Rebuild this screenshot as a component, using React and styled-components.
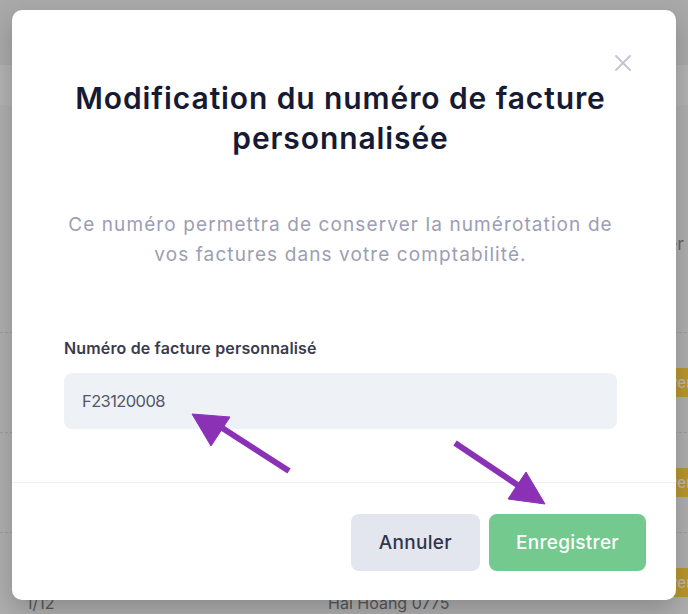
import React from "react";
import styled, { createGlobalStyle } from "styled-components";

const GlobalStyle = createGlobalStyle`
  html, body {
    margin: 0;
    padding: 0;
    overflow: hidden;
  }
  body {
    font-family: Inter, "Noto Sans", sans-serif;
  }
  * {
    box-sizing: border-box;
  }
`;

const rows = [
  { id: 1, ref: "F2312001", client: "Société Martin", badge: "À envoyer" },
  { id: 2, ref: "F2312002", client: "Dupont & Fils", badge: "À envoyer" },
  { id: 3, ref: "1/12", client: "Hai Hoang 0775", badge: "À envoyer" },
];

class App extends React.Component {
  render() {
    return (
      <>
        <GlobalStyle />
        <Page>
          <TopBar />
          <SubBar />
          <TableHead>
            <HeadLabel>Statut à envoyer</HeadLabel>
          </TableHead>
          {rows.map((r) => (
            <Row key={r.id}>
              <Cell>{r.ref}</Cell>
              <Cell>{r.client}</Cell>
              <Badge>{r.badge}</Badge>
            </Row>
          ))}

          <Overlay>
            <Modal>
              <CloseButton aria-label="Fermer">
                <svg width="16" height="16" viewBox="0 0 16 16">
                  <path
                    d="M1 1 L15 15 M15 1 L1 15"
                    stroke="#c3c4d3"
                    strokeWidth="1.8"
                    strokeLinecap="round"
                  />
                </svg>
              </CloseButton>
              <Body>
                <Title>
                  Modification du numéro de facture
                  <br />
                  personnalisée
                </Title>
                <Description>
                  Ce numéro permettra de conserver la numérotation de
                  <br />
                  vos factures dans votre comptabilité.
                </Description>
                <Label htmlFor="num">Numéro de facture personnalisé</Label>
                <Input id="num" defaultValue="F23120008" />
              </Body>
              <Footer>
                <Button>Annuler</Button>
                <Button primary>Enregistrer</Button>
              </Footer>
            </Modal>
          </Overlay>

          <Arrows viewBox="0 0 688 614">
            <g fill="#8b31b6" stroke="#8b31b6">
              <line x1="289" y1="471" x2="216" y2="424" strokeWidth="6" />
              <polygon points="192,414 230,417 211,446" strokeWidth="1" />
              <line x1="455" y1="443" x2="522" y2="488" strokeWidth="6" />
              <polygon points="526,472 508,499 545,504" strokeWidth="1" />
            </g>
          </Arrows>
        </Page>
      </>
    );
  }
}

export default App;

const Page = styled.div`
  position: relative;
  width: 688px;
  height: 614px;
  overflow: hidden;
  background: #f1f1f2;
`;
const TopBar = styled.div`
  height: 65px;
  background: #eaeaea;
`;
const SubBar = styled.div`
  height: 40px;
  background: #f7f7f7;
`;
const TableHead = styled.div`
  height: 227px;
  display: flex;
  align-items: center;
  justify-content: flex-end;
  padding: 50px 4px 0 0;
  color: #8d8d8d;
  font-size: 18px;
`;
const HeadLabel = styled.span``;
const Row = styled.div`
  height: 100px;
  display: grid;
  grid-template-columns: 200px 1fr auto;
  align-items: start;
  border-top: 1px dashed #d6d6d6;
  padding-top: 60px;
  margin-right: -14px;
  color: #7a7a7a;
  font-size: 16px;
`;
const Cell = styled.div`
  padding-left: 26px;
  &:nth-child(2) {
    padding-left: 128px;
  }
`;
const Badge = styled.div`
  align-self: center;
  margin-top: -60px;
  height: 29px;
  display: flex;
  align-items: center;
  padding: 0 10px;
  background: #ffcf40;
  color: #fff;
  font-size: 15px;
  font-weight: 500;
`;

const Overlay = styled.div`
  position: absolute;
  inset: 0;
  background: rgba(0, 0, 0, 0.28);
  display: flex;
  justify-content: center;
  align-items: flex-start;
  padding-top: 10px;
`;
const Modal = styled.div`
  position: relative;
  width: 664px;
  height: 590px;
  background: #fff;
  border-radius: 10px;
  box-shadow: 0 10px 25px rgba(0, 0, 0, 0.2);
  display: flex;
  flex-direction: column;
`;
const CloseButton = styled.button`
  position: absolute;
  top: 45px;
  right: 45px;
  width: 16px;
  height: 16px;
  padding: 0;
  border: none;
  background: none;
  display: flex;
  cursor: pointer;
`;
const Body = styled.div`
  flex: 1;
  padding: 68px 59px 0 52px;
  display: flex;
  flex-direction: column;
`;
const Title = styled.h2`
  margin: 0;
  text-align: center;
  font-size: 30px;
  line-height: 40px;
  font-weight: 600;
  letter-spacing: 0.9px;
  color: #171a33;
`;
const Description = styled.p`
  margin: 52px 0 0;
  text-align: center;
  font-size: 19px;
  line-height: 30px;
  letter-spacing: 1.1px;
  color: #9c9eb3;
`;
const Label = styled.label`
  margin-top: 66px;
  font-size: 16px;
  line-height: 24px;
  font-weight: 600;
  letter-spacing: 0.15px;
  color: #3a3b4e;
`;
const Input = styled.input`
  margin-top: 13px;
  height: 56px;
  width: 100%;
  border: none;
  outline: none;
  border-radius: 8px;
  background: #eef1f6;
  padding: 0 18px;
  font-family: inherit;
  font-size: 16.5px;
  letter-spacing: -0.6px;
  color: #55566a;
`;
const Footer = styled.div`
  border-top: 1px solid #eeeef4;
  display: flex;
  justify-content: flex-end;
  gap: 9px;
  padding: 31px 30px 29px;
`;
const Button = styled.button`
  height: 57px;
  padding: 0 ${(p) => (p.primary ? 27 : 28)}px;
  border: none;
  border-radius: 8px;
  font-family: inherit;
  font-size: 19px;
  font-weight: 500;
  letter-spacing: 0.3px;
  cursor: pointer;
  background: ${(p) => (p.primary ? "#74c98e" : "#e3e6ee")};
  color: ${(p) => (p.primary ? "#fff" : "#33344a")};
`;
const Arrows = styled.svg`
  position: absolute;
  inset: 0;
  width: 688px;
  height: 614px;
  pointer-events: none;
`;
